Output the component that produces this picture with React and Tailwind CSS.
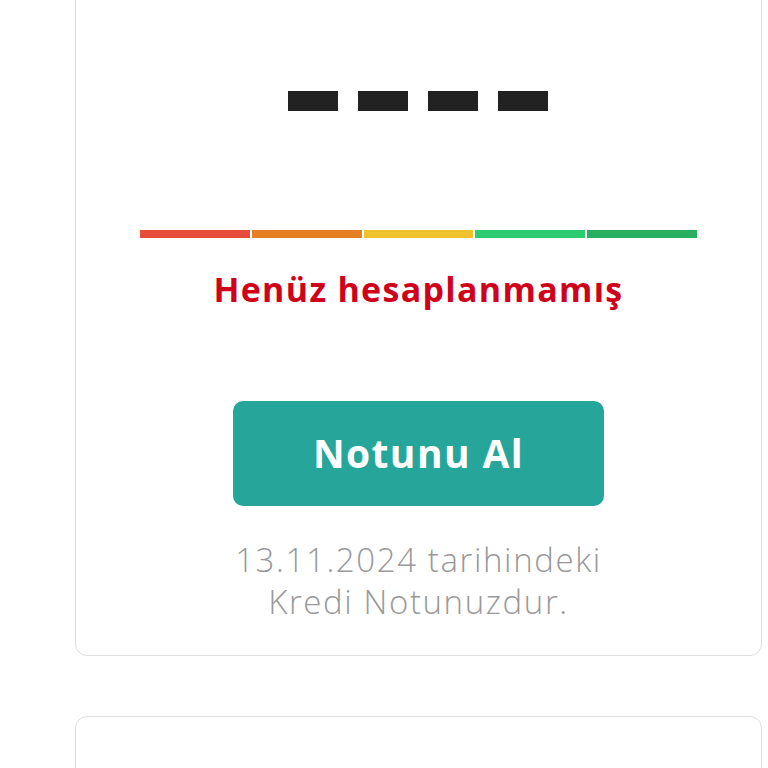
import React from "react";

const segments = ["bg-[#e74c3c]", "bg-[#e67e22]", "bg-[#f0c22e]", "bg-[#2ecc71]", "bg-[#27ae60]"];

export default function App() {
  return (
    <div className="min-h-[768px] bg-white overflow-hidden" style={{ fontFamily: "'Open Sans', Lato, sans-serif" }}>
      <div className="ml-[75px] mr-[6px] -mt-4 rounded-xl border border-[#dedede] bg-white pt-[106px] pb-[32px] flex flex-col items-center">
        <div className="flex gap-[20px] -ml-[2px]">
          {[0, 1, 2, 3].map((i) => (
            <div key={i} className="w-[50px] h-[20px] bg-[#222]" />
          ))}
        </div>
        <div className="mt-[119px] flex gap-[2px] w-[557px]">
          {segments.map((c) => (
            <div key={c} className={`flex-1 h-[8px] ${c}`} />
          ))}
        </div>
        <div className="mt-[30px] text-[34px] leading-[42px] font-bold text-[#d0021b] tracking-[1.3px]">Henüz hesaplanmamış</div>
        <button className="mt-[91px] w-[371px] h-[105px] rounded-[10px] bg-[#26a69a] text-white text-[39px] font-bold tracking-[1.4px]">
          Notunu Al
        </button>
        <div className="mt-[33px] text-center text-[33px] leading-[42px] font-light text-[#999] tracking-[1.6px]">
          13.11.2024 tarihindeki
          <br />
          Kredi Notunuzdur.
        </div>
      </div>
      <div className="ml-[75px] mr-[6px] mt-[60px] h-[120px] rounded-xl border border-[#dedede] bg-white" />
    </div>
  );
}
